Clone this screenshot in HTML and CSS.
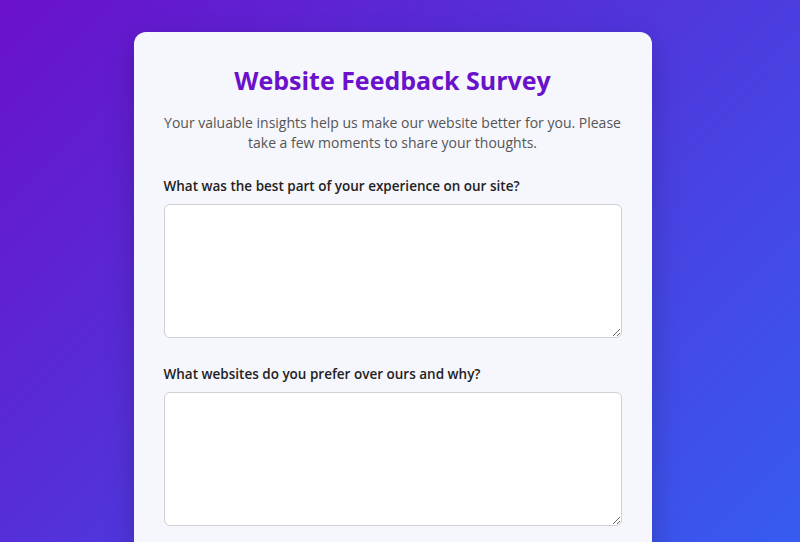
FILE: index.html
```html
<!DOCTYPE html>
<html>
  <head>
    <meta charset="UTF-8" />
    <title>Website Feedback Survey</title>
    <link rel="stylesheet" href="styles.css">
  </head>
  <body>
    <!--Centered card that holds the whole survey form-->
    <div class="page">
      <form class="survey">
        <h1 class="title">Website Feedback Survey</h1>
        <p class="intro">
          Your valuable insights help us make our website better for you. Please
          take a few moments to share your thoughts.
        </p>
        <!--One question per block: a label and a text area-->
        <div class="question">
          <label class="label" for="best">What was the best part of your experience on our site?</label>
          <textarea class="answer" id="best"></textarea>
        </div>
        <div class="question">
          <label class="label" for="prefer">What websites do you prefer over ours and why?</label>
          <textarea class="answer" id="prefer"></textarea>
        </div>
      </form>
    </div>
  </body>
</html>
```

FILE: styles.css
```css
/* full page gradient from purple to blue */
body {
  margin: 0;
  font-family: "Open Sans", "Liberation Sans", sans-serif;
  background: linear-gradient(135deg, #6a11cb 0%, #2575fc 100%);
  min-height: 1000px;
}
.page {
  padding: 32px 15px 40px 0;
}
/* the light card */
.survey {
  width: 458px;
  margin: 0 auto;
  padding: 24px 30px 60px;
  background-color: #f6f6fd;
  border-radius: 12px;
  box-shadow: 0 10px 30px rgba(0, 0, 0, 0.2);
}
.title {
  margin: 0;
  text-align: center;
  font-size: 25px;
  font-weight: 700;
  line-height: 48px;
  color: #6a11cb;
}
.intro {
  margin: 9px 0 23px;
  text-align: center;
  font-size: 14px;
  line-height: 20px;
  color: #555;
}
.question {
  margin-bottom: 26px;
}
.label {
  display: block;
  margin-bottom: 8px;
  font-size: 13.5px;
  font-weight: 600;
  line-height: 20px;
  color: #222;
}
.answer {
  display: block;
  box-sizing: border-box;
  width: 100%;
  height: 134px;
  padding: 10px;
  font-family: inherit;
  font-size: 14px;
  background-color: #fff;
  border: 1px solid #cfcfd6;
  border-radius: 6px;
}
```
